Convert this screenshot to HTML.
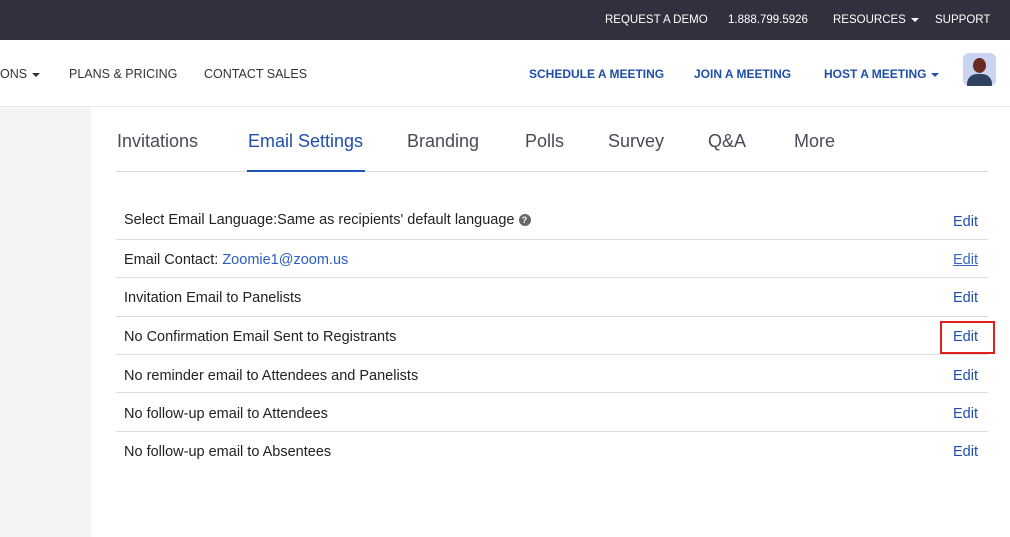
<!DOCTYPE html>
<html><head><meta charset="utf-8"><style>
*{margin:0;padding:0;box-sizing:border-box}
body{width:1010px;height:537px;overflow:hidden;background:#fff;font-family:"Liberation Sans",sans-serif;position:relative}
.top{position:absolute;left:0;top:0;width:1010px;height:40px;background:#30303f}
.t{position:absolute;top:14px;font-size:11.5px;color:#fff;white-space:nowrap}
.nav{position:absolute;top:40px;left:0;width:1010px;height:67px;border-bottom:1px solid #e4e4e8;background:#fff}
.n{position:absolute;top:27px;font-size:12.5px;color:#333;white-space:nowrap}
.b{color:#1f4eaa;font-weight:bold;font-size:12px}
.side{position:absolute;left:0;top:108px;width:91px;height:429px;background:#f4f4f6}
.tab{position:absolute;top:131px;font-size:18px;color:#4a4a55;white-space:nowrap}
.row{position:absolute;left:116px;width:872px;border-bottom:1px solid #dedee2}
.lbl{position:absolute;left:124px;font-size:14.5px;color:#222;white-space:nowrap}
.ed{position:absolute;left:953px;font-size:14.5px;color:#1f4eaa}
.tri{display:inline-block;width:0;height:0;border-left:4px solid transparent;border-right:4px solid transparent;border-top:4px solid currentColor;vertical-align:middle;margin-left:5px}
</style></head><body>
<div class="top">
<span class="t" style="left:605px">REQUEST A DEMO</span>
<span class="t" style="left:728px">1.888.799.5926</span>
<span class="t" style="left:833px">RESOURCES<span class="tri"></span></span>
<span class="t" style="left:935px">SUPPORT</span>
</div>
<div class="nav">
<span class="n" style="left:0">ONS<span class="tri"></span></span>
<span class="n" style="left:69px">PLANS &amp; PRICING</span>
<span class="n" style="left:204px">CONTACT SALES</span>
<span class="n b" style="left:529px">SCHEDULE A MEETING</span>
<span class="n b" style="left:694px">JOIN A MEETING</span>
<span class="n b" style="left:824px">HOST A MEETING<span class="tri"></span></span>
<div style="position:absolute;left:963px;top:13px;width:33px;height:33px;border-radius:6px;background:#c9d3f2;overflow:hidden">
<div style="position:absolute;left:10px;top:5px;width:13px;height:15px;border-radius:50%;background:#6b2a1f"></div>
<div style="position:absolute;left:4px;top:21px;width:25px;height:14px;border-radius:10px 10px 0 0;background:#2e4260"></div>
</div>
</div>
<div class="side"></div>
<span class="tab" style="left:117px">Invitations</span>
<span class="tab" style="left:248px;color:#1f4eaa">Email Settings</span>
<span class="tab" style="left:407px">Branding</span>
<span class="tab" style="left:525px">Polls</span>
<span class="tab" style="left:608px">Survey</span>
<span class="tab" style="left:708px">Q&amp;A</span>
<span class="tab" style="left:794px">More</span>
<div class="row" style="top:171px;height:1px"></div>
<div style="position:absolute;left:247px;top:170px;width:118px;height:2px;background:#2155b8"></div>
<div class="row" style="top:239px;height:1px"></div>
<div class="row" style="top:277px;height:1px"></div>
<div class="row" style="top:316px;height:1px"></div>
<div class="row" style="top:354px;height:1px"></div>
<div class="row" style="top:392px;height:1px"></div>
<div class="row" style="top:431px;height:1px"></div>
<span class="lbl" style="top:212px">Select Email Language:Same as recipients' default language <span style="display:inline-block;width:12px;height:12px;border-radius:50%;background:#666;color:#fff;font-size:9px;text-align:center;line-height:12px;font-weight:bold;vertical-align:1px">?</span></span>
<span class="lbl" style="top:252px">Email Contact: <span style="color:#2a5cc4">Zoomie1@zoom.us</span></span>
<span class="lbl" style="top:290px">Invitation Email to Panelists</span>
<span class="lbl" style="top:329px">No Confirmation Email Sent to Registrants</span>
<span class="lbl" style="top:368px">No reminder email to Attendees and Panelists</span>
<span class="lbl" style="top:406px">No follow-up email to Attendees</span>
<span class="lbl" style="top:444px">No follow-up email to Absentees</span>
<span class="ed" style="top:214px">Edit</span>
<span class="ed" style="top:252px;text-decoration:underline;color:#3a66c0">Edit</span>
<span class="ed" style="top:290px">Edit</span>
<span class="ed" style="top:329px">Edit</span>
<span class="ed" style="top:368px">Edit</span>
<span class="ed" style="top:406px">Edit</span>
<span class="ed" style="top:444px">Edit</span>
<div style="position:absolute;left:940px;top:321px;width:55px;height:33px;border:2px solid #e0201c"></div>
</body></html>
